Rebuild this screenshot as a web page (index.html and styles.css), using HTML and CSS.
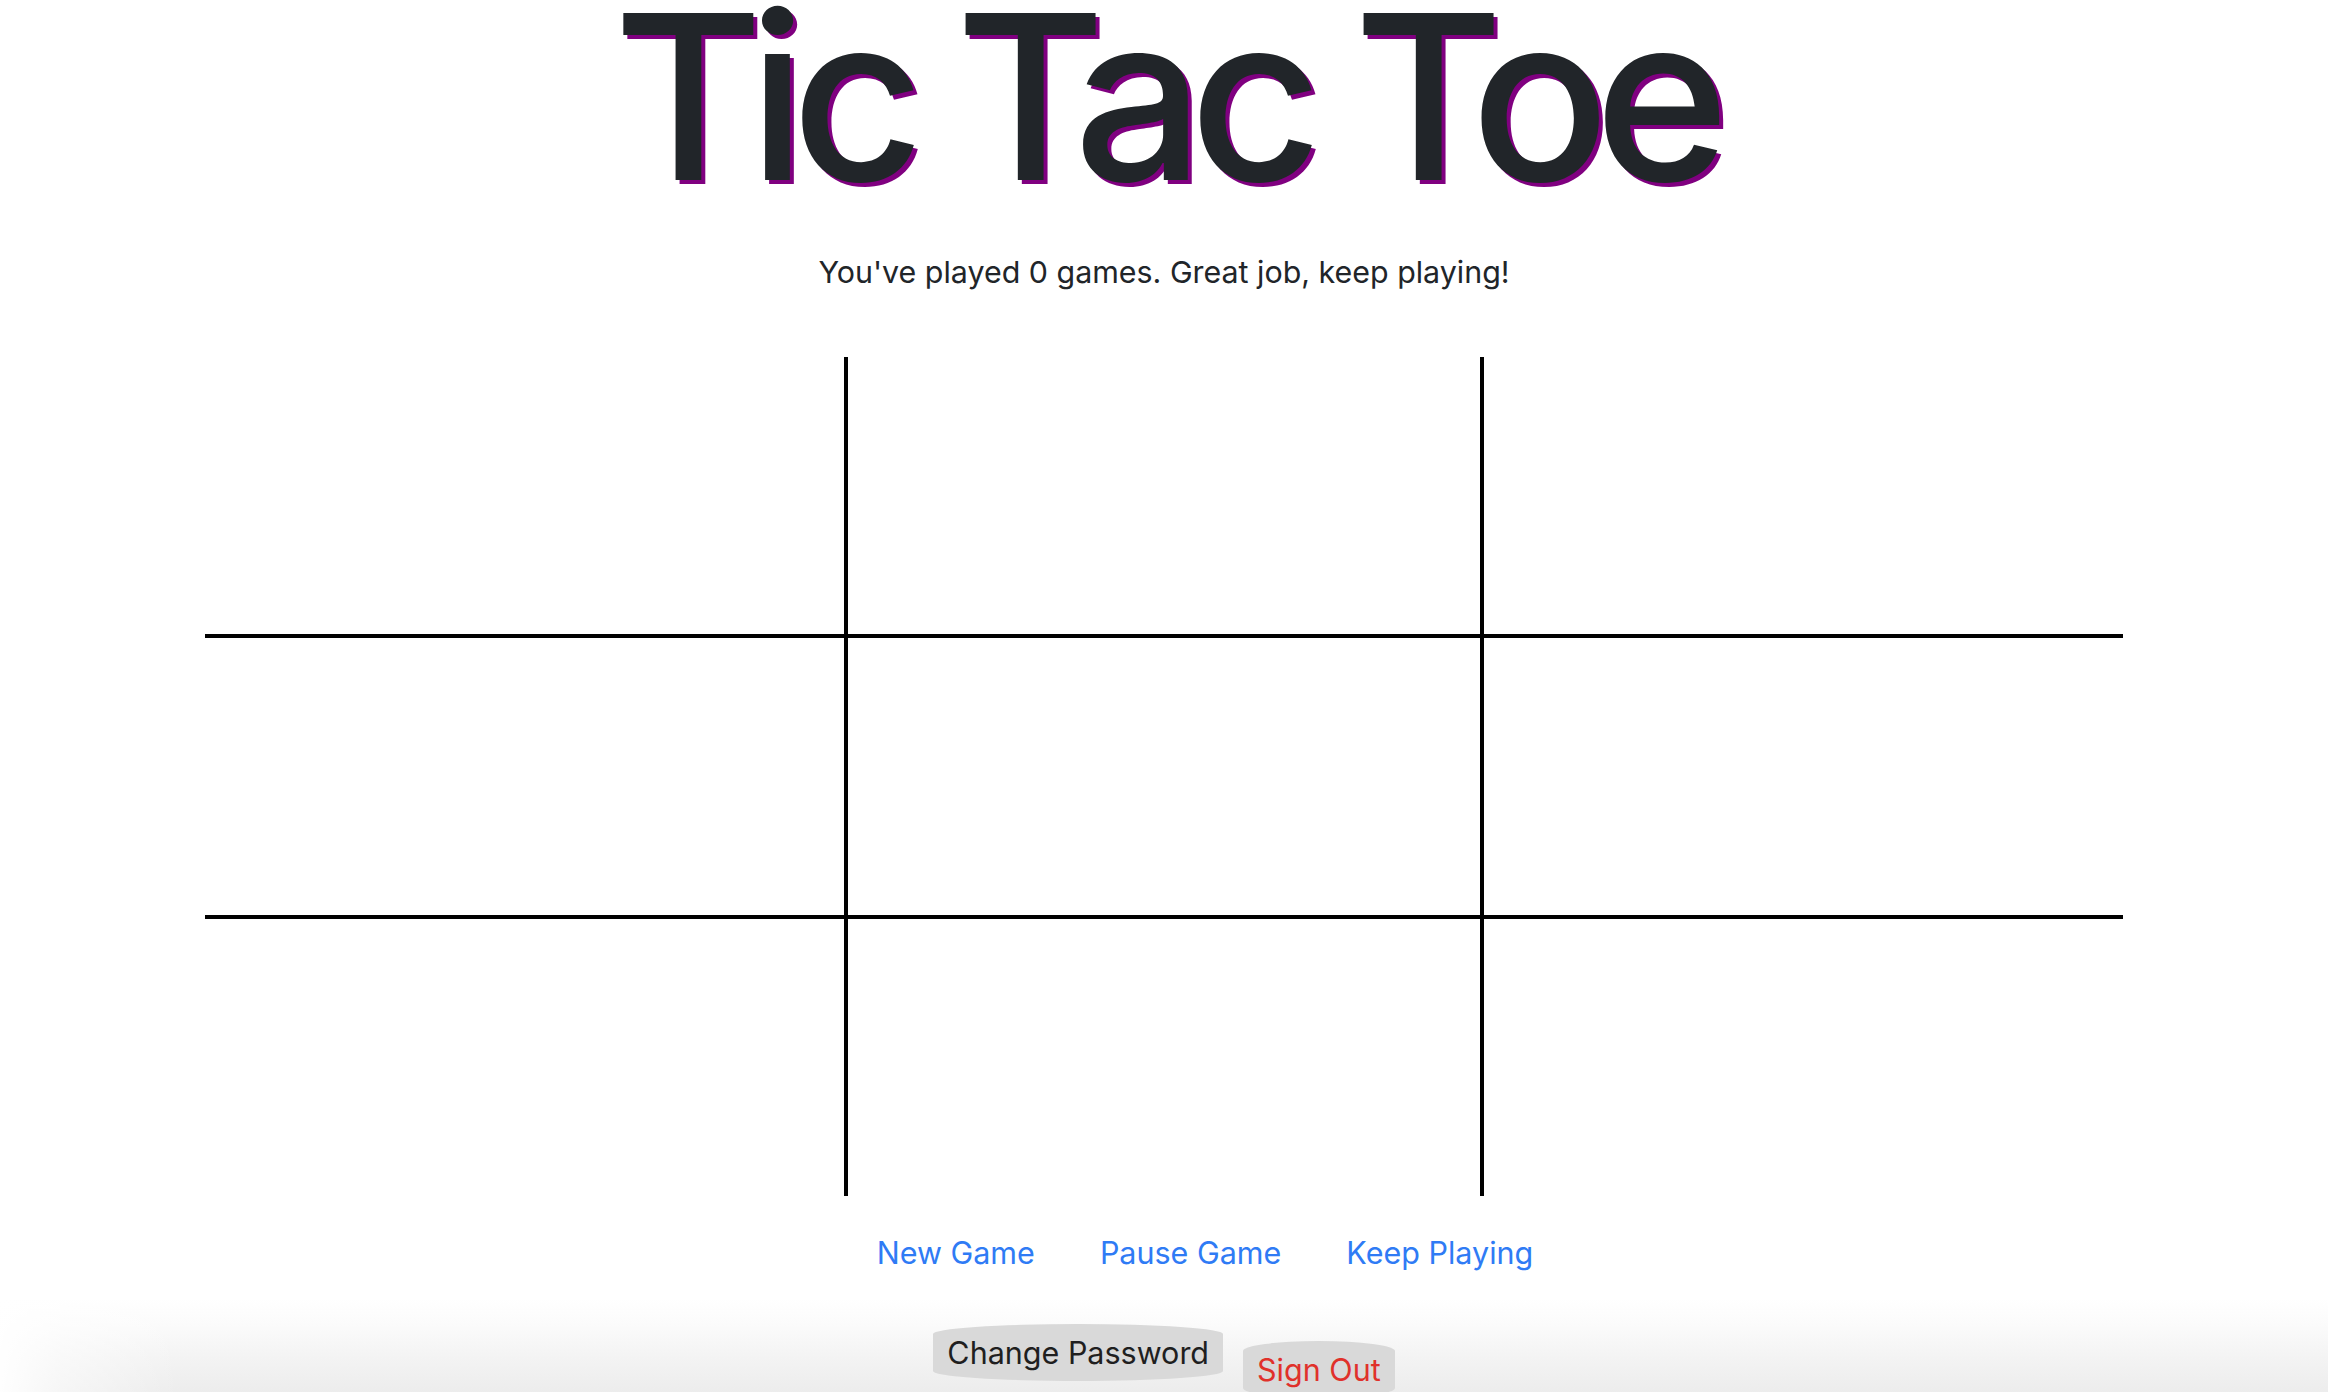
FILE: index.html
```html
<!DOCTYPE html>
<html lang="en">
<head>
<meta charset="utf-8">
<title>Tic Tac Toe</title>
<link rel="stylesheet" href="styles.css">
</head>
<body>
<main class="page">
  <h1 class="title">Tic Tac Toe</h1>
  <p class="games-played">You've played 0 games. Great job, keep playing!</p>
  <div class="board">
    <div class="cell"></div>
    <div class="cell col-mid"></div>
    <div class="cell"></div>
    <div class="cell row-mid"></div>
    <div class="cell row-mid col-mid"></div>
    <div class="cell row-mid"></div>
    <div class="cell"></div>
    <div class="cell col-mid"></div>
    <div class="cell"></div>
  </div>
  <nav class="game-links">
    <a href="#" class="game-link">New Game</a>
    <a href="#" class="game-link">Pause Game</a>
    <a href="#" class="game-link">Keep Playing</a>
  </nav>
  <footer class="account">
    <button class="pill-btn">Change Password</button>
    <button class="pill-btn sign-out">Sign Out</button>
  </footer>
</main>
</body>
</html>
```

FILE: styles.css
```css
html, body {
  margin: 0;
  padding: 0;
  background: #ffffff;
}

body {
  font-family: Inter, "Liberation Sans", sans-serif;
  color: #212529;
  height: 1392px;
  overflow: hidden;
}

.page {
  display: flex;
  flex-direction: column;
  align-items: center;
}

.title {
  margin: 0;
  font-size: 230px;
  font-weight: 500;
  line-height: 0.84;
  letter-spacing: -15px;
  color: #212529;
  text-shadow: 4px 4px #800080;
}

.games-played {
  margin: 59px 0 0;
  font-size: 30.4px;
  line-height: 40px;
}

.board {
  margin-top: 65px;
  width: 1918px;
  display: grid;
  grid-template-columns: repeat(3, 1fr);
}

.cell {
  height: 277px;
}

.col-mid {
  border-left: 4px solid #000;
  border-right: 4px solid #000;
}

.row-mid {
  border-top: 4px solid #000;
  border-bottom: 4px solid #000;
}

.game-links {
  margin-top: 37px;
  margin-left: 82px;
  display: flex;
  gap: 65px;
}

.game-link {
  color: #2f7bf5;
  text-decoration: none;
  font-size: 30.5px;
  line-height: 40px;
}

.account {
  margin-top: 26px;
  width: 100%;
  flex: 1;
  display: flex;
  justify-content: center;
  align-items: flex-start;
  gap: 20px;
  padding-top: 25px;
  height: 100px;
  background:
    linear-gradient(to right, rgba(255,255,255,0.95) 0, rgba(255,255,255,0.5) 60px, rgba(255,255,255,0) 180px),
    linear-gradient(to bottom, #ffffff 0, #fbfbfb 25px, #f3f3f3 60px, #ebebeb 100px);
}

.pill-btn {
  font-family: inherit;
  font-size: 30.5px;
  color: #1f1f1f;
  background: #d9d9d9;
  border: none;
  border-radius: 50% / 10px;
  height: 57px;
  padding: 0 14px;
}

.sign-out {
  color: #e0312b;
  margin-top: 17px;
}
```
